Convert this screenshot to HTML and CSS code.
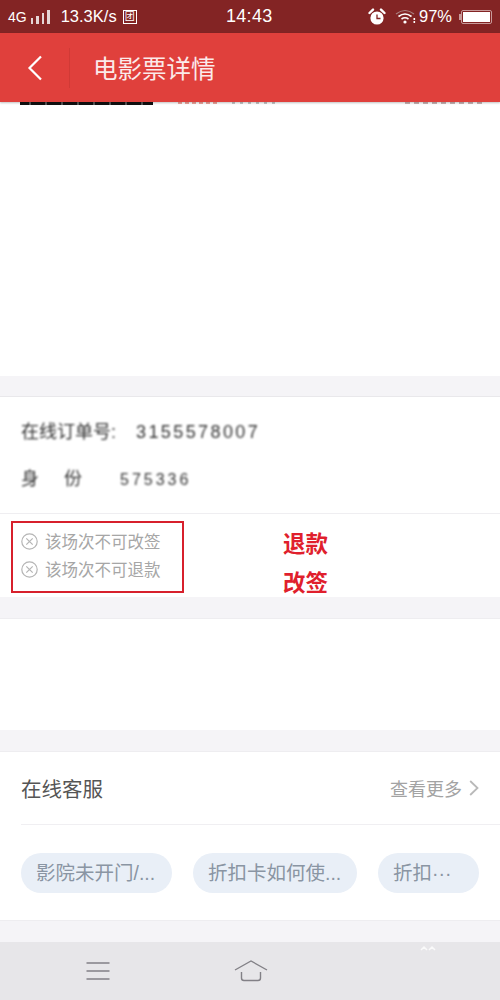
FILE: index.html
```html
<!DOCTYPE html>
<html lang="en">
<head>
    <meta charset="UTF-8">
    <meta name="viewport" content="width=device-width, initial-scale=1.0">
    <link rel="stylesheet" href="styles.css">
    <title>电影票详情</title>
</head>
<body>
    <div class="phone">
        <div class="status-bar">
            <div class="status-left">
                <span class="net">4G</span>
                <span class="signal"><i></i><i></i><i></i><i></i></span>
                <span>13.3K/s</span>
                <span class="status-box">团</span>
            </div>
            <div class="status-time">14:43</div>
            <div class="status-right">
                <svg width="18" height="18" viewBox="0 0 18 18">
                    <circle cx="9" cy="10" r="6.6" fill="#fff"/>
                    <path d="M1.500 5 L5 1.600 M16.500 5 L13 1.600" stroke="#fff" stroke-width="2.400" stroke-linecap="round"/>
                    <path d="M9 6.500 V10.500 H12.500" stroke="#832424" stroke-width="1.300" fill="none"/>
                </svg>
                <svg class="wifi" width="22" height="16" viewBox="0 0 22 16">
                    <path d="M1 5 Q10 -2 19 5" stroke="#a98080" stroke-width="1.200" fill="none"/>
                    <path d="M3.500 7.500 Q10 2.500 16.500 7.500" stroke="#fff" stroke-width="1.600" fill="none"/>
                    <path d="M6.500 10 Q10 7.500 13.500 10" stroke="#fff" stroke-width="1.600" fill="none"/>
                    <circle cx="10" cy="13" r="1.600" fill="#fff"/>
                    <rect x="18.500" y="9" width="1.600" height="2" fill="#fff"/>
                    <rect x="18.500" y="12" width="1.600" height="2" fill="#fff"/>
                </svg>
                <span>97%</span>
                <span class="battery-nub"></span>
                <span class="battery"><span class="battery-fill"></span></span>
            </div>
        </div>

        <header class="title-bar">
            <div class="back">
                <svg width="16" height="26" viewBox="0 0 16 26">
                    <path d="M14 1.500 L2.500 13 L14 24.500" stroke="#fff" stroke-width="2.200" fill="none"/>
                </svg>
            </div>
            <h1>电影票详情</h1>
        </header>

        <section class="card card-top">
            <div class="cut-row">
                <span class="cut-black"></span>
                <span class="cut-red"></span>
                <span class="cut-gray"></span>
                <span class="cut-right"></span>
            </div>
        </section>

        <section class="card card-order">
            <div class="order-info">
                <div class="blur-line">在线订单号: <span class="order-no">3155578007</span></div>
                <div class="blur-line"><span class="label-wide">身 份</span><span class="order-sum">575336</span></div>
            </div>
            <div class="rules">
                <div class="rule">
                    <svg width="17" height="17" viewBox="0 0 17 17">
                        <circle cx="8.500" cy="8.500" r="7.700" stroke="#b5b5b5" stroke-width="1.200" fill="none"/>
                        <path d="M5.300 5.300 L11.700 11.700 M11.700 5.300 L5.300 11.700" stroke="#b5b5b5" stroke-width="1.200"/>
                    </svg>
                    该场次不可改签
                </div>
                <div class="rule">
                    <svg width="17" height="17" viewBox="0 0 17 17">
                        <circle cx="8.500" cy="8.500" r="7.700" stroke="#b5b5b5" stroke-width="1.200" fill="none"/>
                        <path d="M5.300 5.300 L11.700 11.700 M11.700 5.300 L5.300 11.700" stroke="#b5b5b5" stroke-width="1.200"/>
                    </svg>
                    该场次不可退款
                </div>
                <div class="mark-box"></div>
                <div class="mark-text">退款<br>改签</div>
            </div>
        </section>

        <section class="card card-empty"></section>

        <section class="card card-service">
            <div class="service-head">
                <span class="service-title">在线客服</span>
                <span class="service-more">查看更多
                    <svg width="10" height="16" viewBox="0 0 10 16">
                        <path d="M1.200 1 L8.500 8 L1.200 15" stroke="#b9b9b9" stroke-width="1.800" fill="none"/>
                    </svg>
                </span>
            </div>
            <div class="chips">
                <span class="chip chip-a">影院未开门/...</span>
                <span class="chip chip-b">折扣卡如何使...</span>
                <span class="chip chip-c">折扣···</span>
            </div>
        </section>

        <nav class="nav-bar">
            <svg class="nav-menu" width="24" height="20" viewBox="0 0 24 20">
                <path d="M0.500 2 H23.500 M0.500 10 H23.500 M0.500 18 H23.500" stroke="#828086" stroke-width="1.400"/>
            </svg>
            <svg class="nav-home" width="34" height="22" viewBox="0 0 34 22">
                <path d="M1 10 L17 1 L33 10" stroke="#828086" stroke-width="1.400" fill="none"/>
                <path d="M7.500 12 V18 Q7.500 20.500 10 20.500 H24 Q26.500 20.500 26.500 18 V12" stroke="#828086" stroke-width="1.400" fill="none"/>
            </svg>
            <svg class="nav-up" width="16" height="6" viewBox="0 0 16 6">
                <path d="M1 5 L4 2 L7 5 M9 5 L12 2 L15 5" stroke="#fff" stroke-width="1.500" fill="none"/>
            </svg>
        </nav>
    </div>
</body>
</html>
```

FILE: styles.css
```css
* {
    box-sizing: border-box;
}

body {
    margin: 0;
    font-family: "Liberation Sans", "Noto Sans CJK SC", sans-serif;
    background-color: #f5f4f7;
}

.phone {
    width: 500px;
    height: 1000px;
    display: flex;
    flex-direction: column;
    overflow: hidden;
}

.status-bar {
    height: 33px;
    flex-shrink: 0;
    background-color: #832424;
    color: #fff;
    display: flex;
    align-items: center;
    justify-content: space-between;
    padding: 0 8px;
    font-size: 16.500px;
    position: relative;
}

.status-left, .status-right {
    display: flex;
    align-items: center;
}

.net {
    font-size: 14px;
    margin-right: 4px;
}

.signal {
    display: flex;
    align-items: flex-end;
    gap: 3px;
    height: 14px;
    margin-right: 11px;
}

.signal i {
    width: 2.500px;
    background-color: #e6d5d5;
}

.signal i:nth-child(1) { height: 6px; }
.signal i:nth-child(2) { height: 8px; }
.signal i:nth-child(3) { height: 11px; }
.signal i:nth-child(4) { height: 14px; }

.status-box {
    width: 14px;
    height: 14px;
    border: 1.500px solid #fff;
    font-size: 10px;
    line-height: 11px;
    text-align: center;
    margin-left: 6px;
}

.status-time {
    position: absolute;
    left: 226px;
    font-size: 18px;
    letter-spacing: 0.300px;
}

.status-right {
    font-size: 16.500px;
}

.wifi {
    margin-left: 9px;
    margin-right: 2px;
}

.battery-nub {
    width: 2px;
    height: 6px;
    margin-left: 7px;
    background-color: #c89a9a;
}

.battery {
    width: 31px;
    height: 14px;
    padding: 1px;
    border: 1px solid #c89a9a;
    border-radius: 2px;
    display: flex;
}

.battery-fill {
    flex: 1;
    background-color: #fff;
}

.title-bar {
    height: 69px;
    flex-shrink: 0;
    background-color: #e0403c;
    display: flex;
    align-items: center;
    box-shadow: 0 1px 2px rgba(0, 0, 0, 0.25);
    position: relative;
    z-index: 2;
}

.back {
    width: 70px;
    height: 40px;
    padding-left: 27px;
    display: flex;
    align-items: center;
    border-right: 1px solid #d03a36;
}

.title-bar h1 {
    margin: 0 0 0 23px;
    font-size: 24.500px;
    font-weight: 400;
    color: #fbeaea;
}

.card {
    background-color: #fff;
    flex-shrink: 0;
}

.card-top {
    height: 274px;
}

.cut-row {
    height: 3px;
    position: relative;
}

/* bottoms of the text line that slides under the title bar */
.cut-row span {
    position: absolute;
    top: 0;
    height: 2px;
}

.cut-black {
    left: 20px;
    width: 133px;
    height: 3px !important;
    background: repeating-linear-gradient(90deg, #111 0 9px, #555 9px 11px, #111 11px 16px);
}

.cut-red {
    left: 178px;
    width: 42px;
    background: repeating-linear-gradient(90deg, #eda59d 0 4px, #fff 4px 7px);
}

.cut-gray {
    left: 232px;
    width: 48px;
    background: repeating-linear-gradient(90deg, #c6c6c6 0 3px, #fff 3px 8px);
}

.cut-right {
    left: 405px;
    width: 78px;
    background: repeating-linear-gradient(90deg, #c9b4b4 0 5px, #fff 5px 9px);
}

.card-order {
    margin-top: 20px;
    height: 201px;
    border-top: 1px solid #e9e8eb;
}

.order-info {
    height: 117px;
    padding: 23px 0 0 21px;
    border-bottom: 1px solid #efeef1;
}

.blur-line {
    height: 24px;
    margin-bottom: 23px;
    font-size: 18px;
    line-height: 24px;
    color: #333;
    filter: blur(0.800px);
    white-space: nowrap;
}

.order-no {
    margin-left: 15px;
    letter-spacing: 2.400px;
}

.label-wide {
    display: inline-block;
    width: 97px;
    word-spacing: 20px;
}

.order-sum {
    margin-left: 2px;
    font-size: 16px;
    letter-spacing: 3px;
}

.rules {
    position: relative;
    height: 83px;
    padding: 13px 0 0 21px;
}

.rule {
    height: 28px;
    display: flex;
    align-items: center;
    gap: 7px;
    font-size: 16.500px;
    color: #a6a6a6;
}

.mark-box {
    position: absolute;
    left: 11px;
    top: 7px;
    width: 173px;
    height: 72px;
    border: 2px solid #d7202c;
}

.mark-text {
    position: absolute;
    left: 283px;
    top: 11px;
    font-size: 22.500px;
    font-weight: 700;
    line-height: 39px;
    color: #e01f2d;
}

.card-empty {
    margin-top: 21px;
    height: 112px;
    border-top: 1px solid #eeedf0;
}

.card-service {
    margin-top: 21px;
    height: 170px;
    padding-left: 21px;
    border-top: 1px solid #eeedf0;
    border-bottom: 1px solid #eeedf0;
}

.service-head {
    height: 73px;
    display: flex;
    align-items: center;
    justify-content: space-between;
    padding-right: 21px;
    border-bottom: 1px solid #f0eff2;
}

.service-title {
    font-size: 20.500px;
    color: #555;
}

.service-more {
    display: flex;
    align-items: center;
    gap: 7px;
    font-size: 18px;
    color: #a3a3a3;
}

.chips {
    display: flex;
    gap: 21px;
    padding-top: 28px;
}

.chip {
    height: 40px;
    border-radius: 20px;
    background-color: #e9eff7;
    color: #8a95a3;
    font-size: 19.500px;
    line-height: 40px;
    padding-left: 15px;
    white-space: nowrap;
    overflow: hidden;
}

.chip-a { width: 151px; }
.chip-b { width: 164px; }
.chip-c { width: 101px; }

.nav-bar {
    margin-top: 21px;
    height: 58px;
    flex-shrink: 0;
    background-color: #e7e6e9;
    position: relative;
}

.nav-menu {
    position: absolute;
    left: 86px;
    top: 19px;
}

.nav-home {
    position: absolute;
    left: 234px;
    top: 18px;
}

.nav-up {
    position: absolute;
    left: 420px;
    top: 3px;
    opacity: 0.8;
}
```
